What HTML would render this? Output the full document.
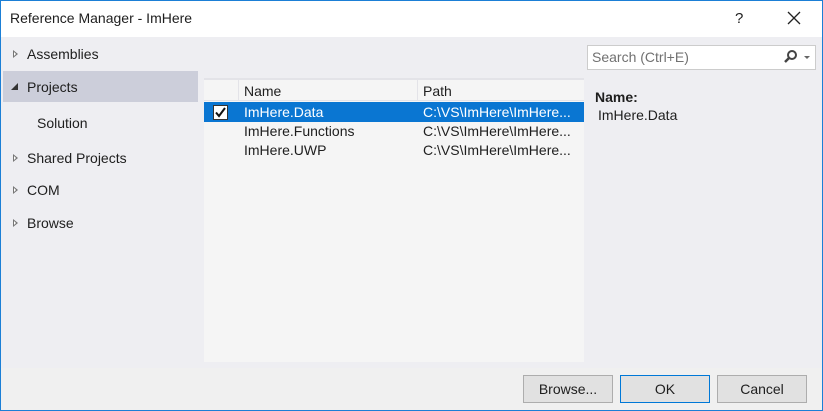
<!DOCTYPE html><html><head><style>
*{margin:0;padding:0;box-sizing:border-box}
body{width:823px;height:411px;overflow:hidden;font-family:"Liberation Sans",sans-serif;font-size:14px;color:#1e1e1e;background:#fff}
.win{position:absolute;left:0;top:0;width:823px;height:411px;background:#eeeef2}
.bd{position:absolute;left:0;top:0;width:823px;height:411px;border:1px solid #1b7fd6;pointer-events:none}
.t{position:absolute;white-space:nowrap}
.tb{position:absolute;left:0;top:0;width:823px;height:37px;background:#fff}
.tri{position:absolute;width:0;height:0;border-top:4px solid transparent;border-bottom:4px solid transparent;border-left:5px solid #777}
.tri::after{content:"";position:absolute;left:-4px;top:-2px;border-top:2px solid transparent;border-bottom:2px solid transparent;border-left:2px solid #fff}
.btn{position:absolute;top:375px;width:90px;height:28px;background:#e1e1e1;border:1px solid #adadad;text-align:center;line-height:26px}
</style></head><body><div class="win">
<div class="tb"></div>
<div class="t" style="left:10px;top:10px">Reference Manager - ImHere</div>
<div class="t" style="left:735px;top:10px;font-size:15px">?</div>
<svg style="position:absolute;left:787px;top:11px" width="14" height="14"><path d="M1 1L13 13M13 1L1 13" stroke="#222" stroke-width="1.3"/></svg>
<div style="position:absolute;left:3px;top:71px;width:195px;height:31px;background:#ccceda"></div>
<div class="tri" style="left:13px;top:50px"></div>
<div class="t" style="left:27px;top:46px">Assemblies</div>
<svg style="position:absolute;left:10px;top:82px" width="9" height="9"><path d="M1 8L8 8L8 1Z" fill="#333"/></svg>
<div class="t" style="left:27px;top:79px">Projects</div>
<div class="t" style="left:37px;top:115px">Solution</div>
<div class="tri" style="left:13px;top:154px"></div>
<div class="t" style="left:27px;top:150px">Shared Projects</div>
<div class="tri" style="left:13px;top:186px"></div>
<div class="t" style="left:27px;top:182px">COM</div>
<div class="tri" style="left:13px;top:219px"></div>
<div class="t" style="left:27px;top:215px">Browse</div>
<div style="position:absolute;left:204px;top:78px;width:380px;height:284px;background:#f5f5f5"></div>
<div style="position:absolute;left:204px;top:78px;width:380px;height:2px;background:#e3e3e8"></div>
<div style="position:absolute;left:204px;top:100px;width:380px;height:1px;background:#e3e3e8"></div>
<div style="position:absolute;left:238px;top:80px;width:1px;height:21px;background:#e3e3e8"></div>
<div style="position:absolute;left:417px;top:80px;width:1px;height:21px;background:#e3e3e8"></div>
<div class="t" style="left:244px;top:83px">Name</div>
<div class="t" style="left:423px;top:83px">Path</div>
<div style="position:absolute;left:204px;top:102px;width:380px;height:20px;background:#0a76d2"></div>
<div style="position:absolute;left:213px;top:105px;width:15px;height:15px;background:#fff;border:1px solid #333"></div>
<svg style="position:absolute;left:213px;top:105px" width="15" height="15"><path d="M3 7.5L6 11L12 3" stroke="#111" stroke-width="2" fill="none"/></svg>
<div class="t" style="left:244px;top:104px;color:#fff">ImHere.Data</div>
<div class="t" style="left:423px;top:104px;color:#fff">C:\VS\ImHere\ImHere...</div>
<div class="t" style="left:244px;top:123px">ImHere.Functions</div>
<div class="t" style="left:423px;top:123px">C:\VS\ImHere\ImHere...</div>
<div class="t" style="left:244px;top:142px">ImHere.UWP</div>
<div class="t" style="left:423px;top:142px">C:\VS\ImHere\ImHere...</div>
<div style="position:absolute;left:587px;top:45px;width:229px;height:25px;background:#fff;border:1px solid #ccc"></div>
<div class="t" style="left:592px;top:49px;color:#717171">Search (Ctrl+E)</div>
<svg style="position:absolute;left:783px;top:49px" width="30" height="16"><circle cx="9" cy="6" r="4" stroke="#444" stroke-width="2" fill="none"/><path d="M6 9L2 13" stroke="#444" stroke-width="2.5"/><path d="M21 7L27 7L24 10Z" fill="#666"/></svg>
<div class="t" style="left:595px;top:89px;font-weight:bold">Name:</div>
<div class="t" style="left:598px;top:107px">ImHere.Data</div>
<div style="position:absolute;left:0;top:368px;width:823px;height:43px;background:#f0f0f0"></div>
<div class="btn" style="left:523px">Browse...</div>
<div class="btn" style="left:620px;border-color:#0078d7">OK</div>
<div class="btn" style="left:717px">Cancel</div>
<div class="bd"></div>
</div></body></html>
